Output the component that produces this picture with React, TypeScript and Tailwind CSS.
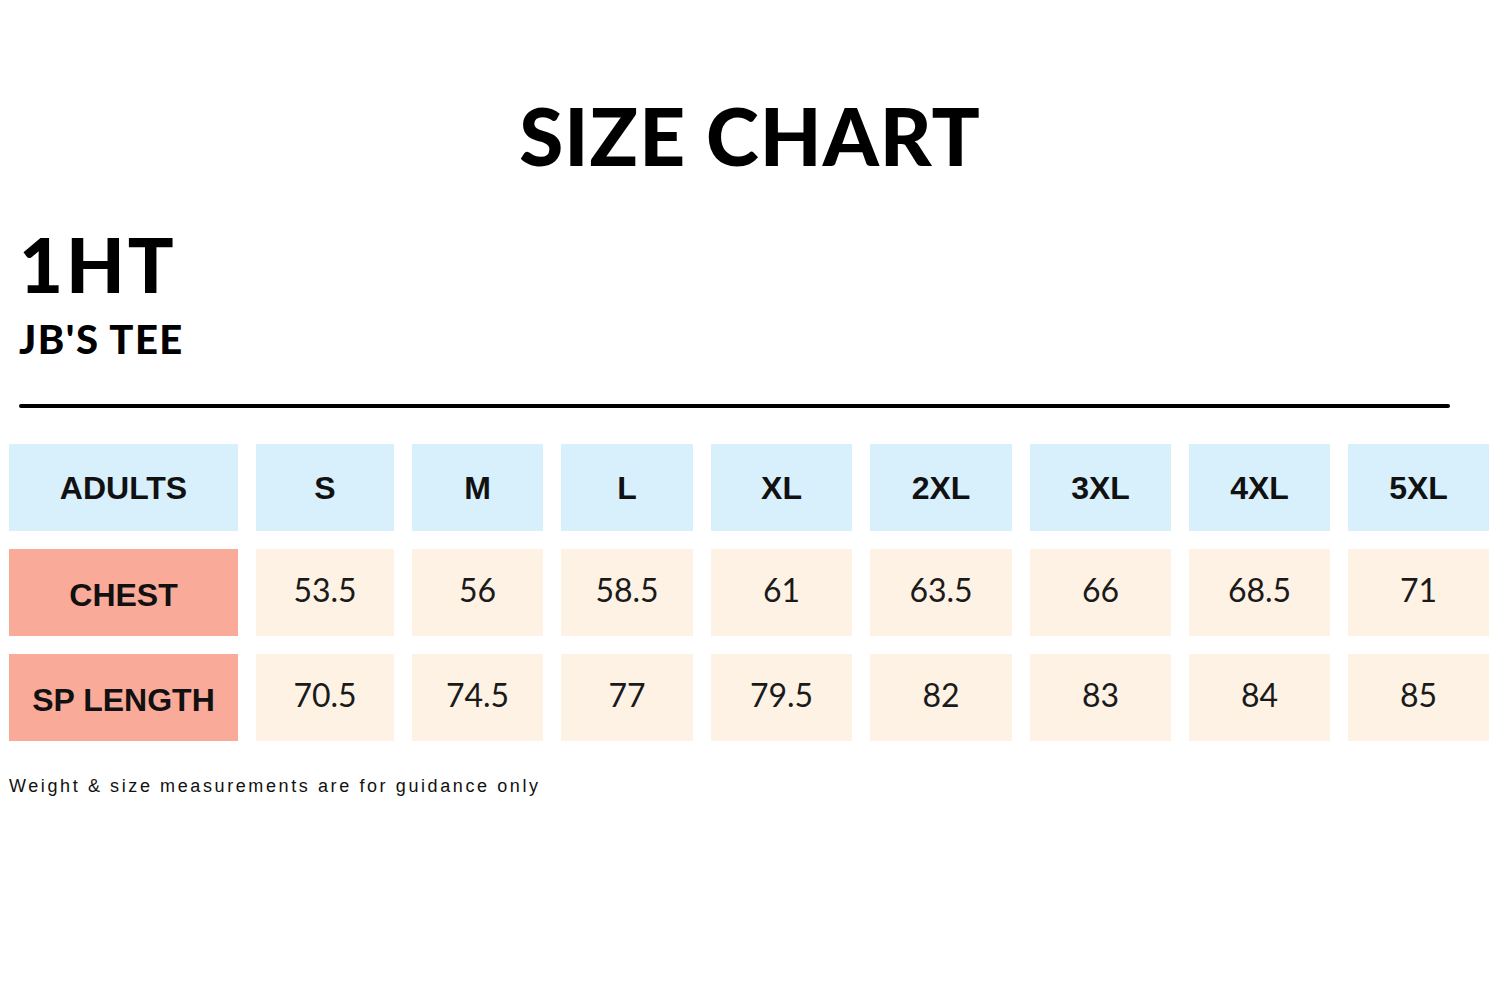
const sizes = ['S', 'M', 'L', 'XL', '2XL', '3XL', '4XL', '5XL'];

const rows = [
  { label: 'CHEST', values: ['53.5', '56', '58.5', '61', '63.5', '66', '68.5', '71'] },
  { label: 'SP LENGTH', values: ['70.5', '74.5', '77', '79.5', '82', '83', '84', '85'] },
];

export default function App() {
  return (
    <div className="w-[1500px] h-[1000px] bg-white text-black font-['Lato','Liberation_Sans',sans-serif]">
      <h1 className="pt-[91px] text-center text-[80px] leading-[88px] font-black tracking-[1px]">
        SIZE CHART
      </h1>

      <div className="pl-[19px] pt-[47px]">
        <div className="text-[76px] leading-[76px] font-black tracking-[3px]">1HT</div>
        <div className="mt-[15px] text-[40px] leading-[44px] font-black tracking-[1.5px]">JB'S TEE</div>
      </div>

      <div className="mx-[19px] mt-[43px] w-[1431px] h-[4px] rounded-full bg-black" />

      <div className="mt-[36px] pl-[9px] grid grid-cols-[229px_138px_131px_132px_141px_142px_141px_141px_141px] auto-rows-[87px] gap-x-[18px] gap-y-[18px]">
        <div className="bg-[#d8effc] flex items-center justify-center font-['Liberation_Sans',sans-serif] font-bold text-[32px] text-[#111]">
          ADULTS
        </div>
        {sizes.map((s) => (
          <div
            key={s}
            className="bg-[#d8effc] flex items-center justify-center font-['Liberation_Sans',sans-serif] font-bold text-[32px] text-[#111]"
          >
            {s}
          </div>
        ))}
        {rows.map((row) => (
          <>
            <div
              key={row.label}
              className="bg-[#f9aa98] flex items-center justify-center pt-[4px] font-['Liberation_Sans',sans-serif] font-bold text-[32px] text-[#111]"
            >
              {row.label}
            </div>
            {row.values.map((v, i) => (
              <div
                key={row.label + i}
                className="bg-[#fef2e5] flex items-center justify-center pb-[6px] text-[32px] text-[#1a1a1a]"
              >
                {v}
              </div>
            ))}
          </>
        ))}
      </div>

      <p className="mt-[32px] pl-[9px] font-['Liberation_Sans',sans-serif] text-[18px] tracking-[2.6px] text-[#111]">
        Weight &amp; size measurements are for guidance only
      </p>
    </div>
  );
}
